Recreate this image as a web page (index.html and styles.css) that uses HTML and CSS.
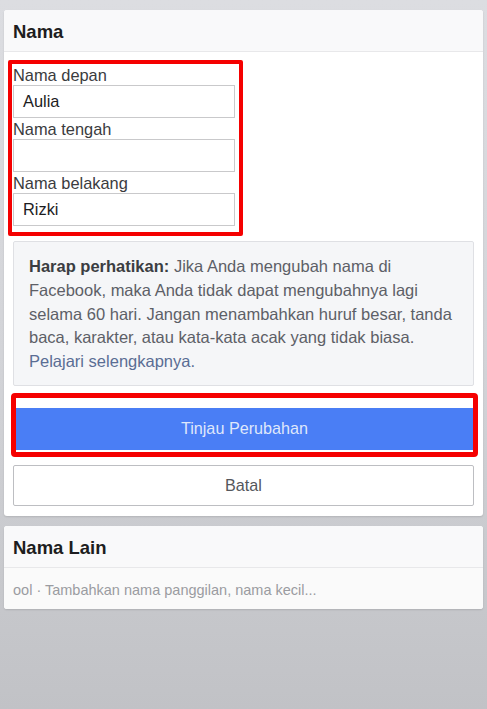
FILE: index.html
```html
<!DOCTYPE html>
<html lang="id">
<head>
<meta charset="utf-8">
<title>Nama</title>
<link rel="stylesheet" href="styles.css">
</head>
<body>
<div class="page">
  <section class="card">
    <header class="card-head">Nama</header>
    <div class="card-body">
      <div class="fields">
        <label class="field">
          <span class="field-label">Nama depan</span>
          <span class="input">Aulia</span>
        </label>
        <label class="field">
          <span class="field-label">Nama tengah</span>
          <span class="input"></span>
        </label>
        <label class="field">
          <span class="field-label">Nama belakang</span>
          <span class="input">Rizki</span>
        </label>
      </div>
      <div class="notice">
        <b>Harap perhatikan:</b> Jika Anda mengubah nama di<br>
        Facebook, maka Anda tidak dapat mengubahnya lagi<br>
        selama 60 hari. Jangan menambahkan huruf besar, tanda<br>
        baca, karakter, atau kata-kata acak yang tidak biasa.<br>
        <a class="link" href="#">Pelajari selengkapnya.</a>
      </div>
      <div class="highlight">
        <button class="btn-primary" type="button">Tinjau Perubahan</button>
      </div>
      <button class="btn-secondary" type="button">Batal</button>
    </div>
  </section>
  <section class="card card-other">
    <header class="card-head">Nama Lain</header>
    <div class="card-sub">ool · Tambahkan nama panggilan, nama kecil...</div>
  </section>
</div>
</body>
</html>
```
FILE: styles.css
```css
html, body {
  margin: 0;
  padding: 0;
  height: 100%;
}
body {
  background: linear-gradient(to bottom, #dcdde1 0%, #d3d4d8 50%, #c1c2c6 100%);
  font-family: "Liberation Sans", Arial, sans-serif;
  color: #1c1e21;
}
.page {
  padding: 10px 4px 0 4px;
  display: flex;
  flex-direction: column;
  gap: 10px;
}
.card {
  background: #fff;
  border-radius: 3px;
  box-shadow: 0 1px 2px rgba(0,0,0,0.12);
  overflow: hidden;
}
.card-head {
  height: 42px;
  box-sizing: border-box;
  padding: 3px 9px 0 9px;
  display: flex;
  align-items: center;
  font-size: 18.5px;
  font-weight: bold;
  color: #1d1d20;
  background: #f9f9fa;
  border-bottom: 1px solid #e8e8ea;
}
.card-body {
  padding: 8px 9px 10px 4px;
  display: flex;
  flex-direction: column;
}
.fields {
  align-self: flex-start;
  width: 235px;
  box-sizing: border-box;
  border: 4px solid #f50000;
  border-radius: 2px;
  padding: 0 4px 6px 1px;
  display: flex;
  flex-direction: column;
}
.field {
  display: flex;
  flex-direction: column;
}
.field-label {
  font-size: 16.4px;
  line-height: 20px;
  padding-top: 1px;
  color: #3a3b3e;
}
.input {
  height: 33px;
  box-sizing: border-box;
  border: 1px solid #c9c9cb;
  background: #fff;
  padding: 0 9px;
  display: flex;
  align-items: center;
  font-size: 16.4px;
  color: #1c1c1e;
}
.notice {
  margin: 5px 0 0 5px;
  background: #f5f6f8;
  border: 1px solid #dfe0e4;
  border-radius: 2px;
  padding: 13px 10px 11px 15px;
  font-size: 16.5px;
  line-height: 23.8px;
  color: #5d6067;
  white-space: nowrap;
}
.notice b {
  color: #3b3d42;
}
.link {
  color: #5a6d94;
  text-decoration: none;
}
.highlight {
  margin: 7px -4px 0 3px;
  border: 5px solid #f50000;
  border-radius: 4px;
  padding: 10px 0 2px 0;
  background: #fff;
}
.btn-primary {
  display: block;
  width: 100%;
  height: 42px;
  border: 0;
  margin: 0;
  background: #4a7ef5;
  color: #dfe7fb;
  font-family: inherit;
  font-size: 16.2px;
}
.btn-secondary {
  margin: 8px 0 0 5px;
  height: 41px;
  border: 1px solid #bdbec2;
  border-radius: 2px;
  background: #fff;
  color: #55575c;
  font-family: inherit;
  font-size: 16.2px;
}
.card-sub {
  height: 41px;
  box-sizing: border-box;
  padding: 3px 9px 0 9px;
  display: flex;
  align-items: center;
  font-size: 14.5px;
  color: #9a9ca1;
  background: #fafafa;
}
```
